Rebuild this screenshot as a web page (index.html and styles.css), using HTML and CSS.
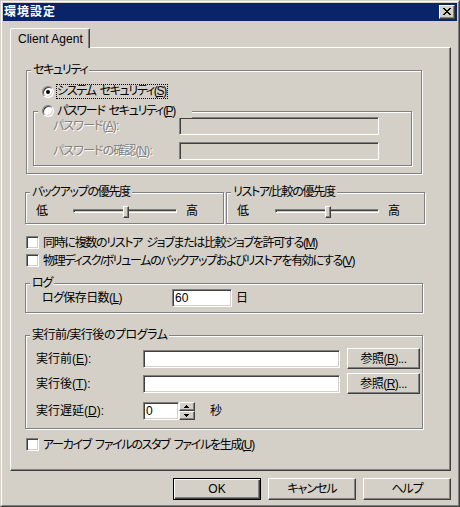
FILE: index.html
```html
<!DOCTYPE html>
<html lang="ja">
<head>
<meta charset="utf-8">
<title>環境設定</title>
<link rel="stylesheet" href="styles.css">
</head>
<body>
<div class="window">
  <div class="frame">
    <div class="titlebar">
      <span class="title">環境設定</span>
      <span class="close">
        <svg width="8" height="7" viewBox="0 0 8 7" shape-rendering="crispEdges"><path d="M0 0h2v1h-2zM6 0h2v1h-2zM1 1h2v1h-2zM5 1h2v1h-2zM2 2h4v1h-4zM3 3h2v1h-2zM2 4h4v1h-4zM1 5h2v1h-2zM5 5h2v1h-2zM0 6h2v1h-2zM6 6h2v1h-2z" fill="#000"/></svg>
      </span>
    </div>
    <div class="client">
      <div class="tabs"><div class="tab">Client Agent</div></div>
      <div class="panel">
        <div class="group g-security">
          <span class="gtitle">セキュリティ</span>
          <div class="radio-row">
            <span class="rb checked"></span>
            <span class="focus">システム セキュリティ(<u>S</u>)</span>
          </div>
          <div class="group g-password">
            <span class="gtitle radio-title"><span class="rb"></span><span class="rb-text">パスワード セキュリティ(<u>P</u>)</span></span>
            <div class="pw-row">
              <span class="pw-label disabled">パスワード(<u>A</u>):</span>
              <span class="edit disabled pw-edit"></span>
            </div>
            <div class="pw-row">
              <span class="pw-label disabled">パスワードの確認(<u>N</u>):</span>
              <span class="edit disabled pw-edit"></span>
            </div>
          </div>
        </div>

        <div class="prio-row">
          <div class="group g-prio">
            <span class="gtitle">バックアップの優先度</span>
            <div class="slider-row">
              <span class="lo">低</span>
              <span class="track"><span class="thumb"></span></span>
              <span class="hi">高</span>
            </div>
          </div>
          <div class="group g-prio g-restore">
            <span class="gtitle">リストア/比較の優先度</span>
            <div class="slider-row">
              <span class="lo">低</span>
              <span class="track track-wide"><span class="thumb"></span></span>
              <span class="hi">高</span>
            </div>
          </div>
        </div>

        <div class="check-row first">
          <span class="cb"></span>
          <span class="check-text">同時に複数のリストア ジョブまたは比較ジョブを許可する(<u>M</u>)</span>
        </div>
        <div class="check-row second">
          <span class="cb"></span>
          <span class="check-text">物理ディスク/ボリュームのバックアップおよびリストアを有効にする(<u>V</u>)</span>
        </div>

        <div class="group g-log">
          <span class="gtitle">ログ</span>
          <div class="log-row">
            <span class="log-label">ログ保存日数(<u>L</u>)</span>
            <span class="edit log-edit">60</span>
            <span class="unit">日</span>
          </div>
        </div>

        <div class="group g-program">
          <span class="gtitle loose">実行前/実行後のプログラム</span>
          <div class="prog-row">
            <span class="prog-label">実行前(<u>E</u>):</span>
            <span class="edit prog-edit"></span>
            <span class="btn browse">参照(<u>B</u>)...</span>
          </div>
          <div class="prog-row">
            <span class="prog-label">実行後(<u>T</u>):</span>
            <span class="edit prog-edit"></span>
            <span class="btn browse">参照(<u>R</u>)...</span>
          </div>
          <div class="prog-row delay-row">
            <span class="prog-label">実行遅延(<u>D</u>):</span>
            <span class="edit spin-edit">0</span>
            <span class="spin">
              <span class="spin-btn"><svg width="5" height="3" viewBox="0 0 5 3" shape-rendering="crispEdges"><path d="M2 0h1v1h-1zM1 1h3v1h-3zM0 2h5v1h-5z" fill="#000"/></svg></span>
              <span class="spin-btn"><svg width="5" height="3" viewBox="0 0 5 3" shape-rendering="crispEdges"><path d="M0 0h5v1h-5zM1 1h3v1h-3zM2 2h1v1h-1z" fill="#000"/></svg></span>
            </span>
            <span class="unit-sec">秒</span>
          </div>
        </div>

        <div class="check-row third">
          <span class="cb"></span>
          <span class="check-text">アーカイブ ファイルのスタブ ファイルを生成(<u>U</u>)</span>
        </div>
      </div>
      <div class="buttons">
        <span class="btn dlg default">OK</span>
        <span class="btn dlg">キャンセル</span>
        <span class="btn dlg">ヘルプ</span>
      </div>
    </div>
  </div>
</div>
</body>
</html>
```

FILE: styles.css
```css
* { box-sizing: border-box; }
html, body { margin: 0; padding: 0; }
body {
  width: 460px;
  height: 507px;
  overflow: hidden;
  background: #d4d0c8;
  color: #000;
  font-family: "Liberation Sans", "Noto Sans CJK JP", sans-serif;
  font-size: 12px;
  line-height: 14px;
  font-feature-settings: "palt";
  letter-spacing: -1.3px;
  word-spacing: 2px;
}
u { text-decoration: underline; }
.loose { letter-spacing: -0.5px; }

.window {
  width: 460px;
  height: 507px;
  border: 1px solid;
  border-color: #d4d0c8 #404040 #404040 #d4d0c8;
}
.frame {
  height: 100%;
  border: 1px solid;
  border-color: #fff #808080 #808080 #fff;
  padding: 1px;
  display: flex;
  flex-direction: column;
}
.titlebar {
  flex: none;
  height: 18px;
  background: #0a246a;
  display: flex;
  align-items: center;
  justify-content: space-between;
  padding: 0 2px 0 1px;
}
.title {
  color: #fff;
  font-weight: bold;
  letter-spacing: 1px;
}
.close {
  width: 16px;
  height: 14px;
  background: #d4d0c8;
  border: 1px solid;
  border-color: #fff #404040 #404040 #fff;
  box-shadow: inset -1px -1px 0 #808080;
  display: flex;
  align-items: center;
  justify-content: center;
  padding: 0 1px 1px 0;
}
.close svg { display: block; }

.client {
  flex: 1;
  padding: 7px 6px 0 7px;
  display: flex;
  flex-direction: column;
}
.tabs { display: flex; }
.tab {
  position: relative;
  z-index: 1;
  width: 80px;
  height: 20px;
  margin-bottom: -1px;
  background: #d4d0c8;
  border: 1px solid;
  border-bottom: none;
  border-color: #fff #404040 transparent #fff;
  border-radius: 2px 2px 0 0;
  box-shadow: inset -1px 0 0 #808080;
  padding: 3px 0 0 7px;
  white-space: nowrap;
  letter-spacing: 0;
  word-spacing: 0;
}
.panel {
  width: 441px;
  height: 424px;
  border: 1px solid;
  border-color: #fff #404040 #404040 #fff;
  box-shadow: inset -1px -1px 0 #808080;
}

/* group boxes */
.group {
  position: relative;
  border: 1px solid #808080;
  box-shadow: 1px 1px 0 #fff, inset 1px 1px 0 #fff;
}
.gtitle {
  position: absolute;
  top: -8px;
  left: 4px;
  padding: 0 2px;
  background: #d4d0c8;
  white-space: nowrap;
}

.g-security {
  margin: 22px 0 0 15px;
  width: 396px;
  height: 104px;
}
.radio-row {
  display: flex;
  align-items: center;
  height: 15px;
  margin: 13px 0 0 15px;
}
.rb {
  flex: none;
  width: 12px;
  height: 12px;
  border-radius: 50%;
  background: #fff;
  border: 1px solid;
  border-color: #808080 #fff #fff #808080;
  box-shadow: inset 1px 1px 0 #404040, inset -1px -1px 0 #d4d0c8;
  display: grid;
  place-items: center;
}
.rb.checked::after {
  content: "";
  width: 4px;
  height: 4px;
  border-radius: 50%;
  background: #000;
}
.focus {
  margin-left: 2px;
  border: 1px dotted #000;
  padding: 0 1px 0 0;
  line-height: 13px;
  white-space: nowrap;
}

.g-password {
  margin: 12px 0 0 6px;
  width: 379px;
  height: 55px;
}
.radio-title {
  top: -9px;
  width: 154px;
  height: 15px;
  padding: 0 0 0 4px;
  display: flex;
  align-items: center;
}
.rb-text { margin-left: 3px; white-space: nowrap; }

.pw-row {
  display: flex;
  align-items: center;
  height: 18px;
  margin: 5px 0 0 19px;
}
.pw-row + .pw-row { margin-top: 7px; }
.pw-label { width: 126px; flex: none; white-space: nowrap; letter-spacing: -0.9px; }
.disabled { color: #808080; text-shadow: 1px 1px 0 #fff; }

.edit {
  flex: none;
  height: 18px;
  background: #fff;
  border: 1px solid;
  border-color: #808080 #fff #fff #808080;
  box-shadow: inset 1px 1px 0 #404040, inset -1px -1px 0 #d4d0c8;
  padding: 1px 0 0 2px;
  line-height: 14px;
  letter-spacing: 0;
}
.edit.disabled { background: #d4d0c8; }
.pw-edit { width: 200px; }

/* priority sliders */
.prio-row {
  display: flex;
  margin: 18px 0 0 14px;
}
.g-prio { width: 199px; height: 32px; }
.g-restore { margin-left: 2px; }
.slider-row {
  display: flex;
  align-items: center;
  height: 16px;
  margin: 10px 0 0 10px;
}
.lo, .hi { flex: none; width: 12px; white-space: nowrap; }
.track {
  position: relative;
  flex: none;
  width: 104px;
  height: 4px;
  margin-left: 25px;
  border: 1px solid;
  border-color: #808080 #fff #fff #808080;
  box-shadow: inset 1px 1px 0 #404040;
  background: #d4d0c8;
}
.track-wide { margin-left: 26px; }
.hi { margin-left: 9px; }
.thumb {
  position: absolute;
  left: 49px;
  top: -4px;
  width: 6px;
  height: 12px;
  background: #d4d0c8;
  border: 1px solid;
  border-color: #fff #404040 #404040 #fff;
  box-shadow: inset -1px -1px 0 #808080;
}

/* checkboxes */
.check-row {
  display: flex;
  align-items: center;
  height: 13px;
  margin: 12px 0 0 15px;
}
.check-row.second { margin-top: 5px; }
.check-row.third { margin-top: 9px; }
.cb {
  flex: none;
  width: 13px;
  height: 13px;
  background: #fff;
  border: 1px solid;
  border-color: #808080 #fff #fff #808080;
  box-shadow: inset 1px 1px 0 #404040, inset -1px -1px 0 #d4d0c8;
}
.check-text { margin-left: 4px; white-space: nowrap; }

/* log */
.g-log {
  margin: 16px 0 0 14px;
  width: 398px;
  height: 30px;
}
.log-row {
  display: flex;
  align-items: center;
  height: 18px;
  margin: 5px 0 0 16px;
}
.log-label { width: 130px; flex: none; white-space: nowrap; letter-spacing: -0.6px; }
.log-edit { width: 60px; }
.unit { margin-left: 4px; }

/* programs */
.g-program {
  margin: 22px 0 0 14px;
  width: 398px;
  height: 94px;
}
.prog-row {
  display: flex;
  align-items: center;
  height: 21px;
  margin: 12px 0 0 10px;
}
.prog-row + .prog-row { margin-top: 4px; }
.prog-row.delay-row { height: 18px; margin-top: 8px; }
.prog-label { width: 107px; flex: none; white-space: nowrap; letter-spacing: 0; }
.prog-edit { width: 197px; }
.spin-edit { width: 36px; }
.spin {
  flex: none;
  width: 16px;
  height: 18px;
  display: flex;
  flex-direction: column;
}
.spin-btn {
  flex: 1;
  background: #d4d0c8;
  border: 1px solid;
  border-color: #fff #404040 #404040 #fff;
  box-shadow: inset -1px -1px 0 #808080;
  display: flex;
  align-items: center;
  justify-content: center;
  padding: 0 1px 1px 0;
}
.spin-btn svg { display: block; }
.unit-sec { margin-left: 15px; }

/* buttons */
.btn {
  flex: none;
  display: flex;
  align-items: center;
  justify-content: center;
  background: #d4d0c8;
  border: 1px solid;
  border-color: #fff #404040 #404040 #fff;
  box-shadow: inset -1px -1px 0 #808080;
  white-space: nowrap;
}
.browse {
  margin-left: 7px;
  width: 73px;
  height: 21px;
  letter-spacing: -0.5px;
}
.buttons {
  display: flex;
  justify-content: flex-end;
  gap: 7px;
  margin-top: 7px;
}
.dlg {
  width: 88px;
  height: 22px;
  letter-spacing: -1px;
}
.dlg.default {
  border-color: #000;
  letter-spacing: 0;
  box-shadow: inset 1px 1px 0 #fff, inset -1px -1px 0 #404040, inset -2px -2px 0 #808080;
}
```
